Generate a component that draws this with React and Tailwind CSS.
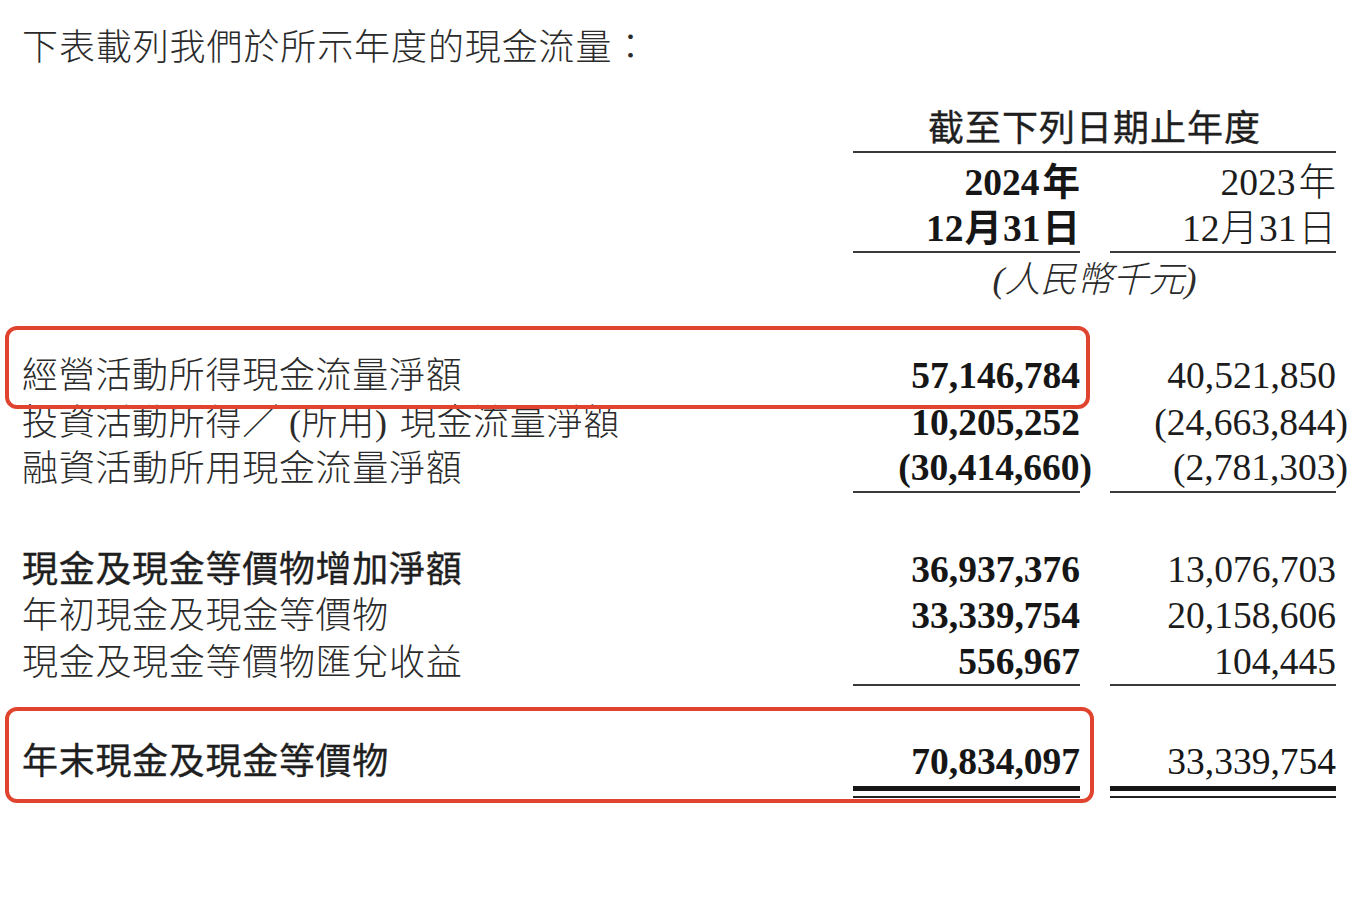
import React from 'react'

const serif = { fontFamily: '"Liberation Serif", "Noto Sans CJK TC", serif' }

const rowsTop = [
  { key: 'op', label: '經營活動所得現金流量淨額', a: '57,146,784', b: '40,521,850' },
  {
    key: 'inv',
    label: (
      <>
        投資活動所得／<span className="ml-[10px]">(</span>所用<span className="mr-[12px]">)</span>現金流量淨額
      </>
    ),
    a: '10,205,252',
    b: '(24,663,844)',
    bNeg: true,
  },
  { key: 'fin', label: '融資活動所用現金流量淨額', a: '(30,414,660)', aNeg: true, b: '(2,781,303)', bNeg: true },
]

const rowsMid = [
  { key: 'inc', label: '現金及現金等價物增加淨額', bold: true, a: '36,937,376', b: '13,076,703' },
  { key: 'beg', label: '年初現金及現金等價物', a: '33,339,754', b: '20,158,606' },
  { key: 'fx', label: '現金及現金等價物匯兌收益', a: '556,967', b: '104,445' },
]

const medium = 'font-normal text-[#1f1f1f] [-webkit-text-stroke:0.35px_#1f1f1f]'

const Num = ({ value, neg, bold }) => (
  <span className={`${bold ? 'font-bold' : 'font-normal'} ${neg ? '-mr-[12px]' : ''}`}>{value}</span>
)

const Row = ({ row, last }) => (
  <div className="flex h-[46.5px] items-center">
    <div className={`flex-1 pl-[22px] text-[36px] leading-[46px] tracking-[0.7px] whitespace-nowrap ${row.bold ? medium : 'font-light text-[#2b2b2b]'}`}>
      {row.label}
    </div>
    <div className={`w-[227px] h-full flex items-center justify-end text-[37.5px] leading-[46px] text-[#161616] ${last ? 'border-b-2 border-[#3a3a3a]' : ''}`}>
      <Num value={row.a} neg={row.aNeg} bold />
    </div>
    <div className="w-[30px]" />
    <div className={`w-[226px] h-full flex items-center justify-end text-[37.5px] leading-[46px] text-[#1c1c1c] ${last ? 'border-b-2 border-[#3a3a3a]' : ''}`}>
      <Num value={row.b} neg={row.bNeg} />
    </div>
    <div className="w-[30px]" />
  </div>
)

const TotalCell = ({ value, bold, width }) => (
  <div className={width}>
    <div className={`h-[46px] text-right text-[37.5px] leading-[46px] text-[#161616] ${bold ? 'font-bold' : 'font-normal'}`}>{value}</div>
    <div className="mt-[1px] h-[5px] bg-[#161616]" />
    <div className="mt-[5px] h-[2px] bg-[#222]" />
  </div>
)

export default function App() {
  return (
    <div className="relative w-[1366px] h-[900px] bg-white overflow-hidden" style={serif}>
      {/* intro */}
      <div className="pt-[25px] pl-[22px] text-[36px] leading-[46px] tracking-[0.9px] font-light text-[#2b2b2b]">
        下表載列我們於所示年度的現金流量：
      </div>

      {/* column header */}
      <div className="mt-[35px] flex">
        <div className="flex-1" />
        <div className="w-[483px]">
          <div className={`h-[47px] border-b-2 border-[#3a3a3a] text-center text-[36px] leading-[46px] tracking-[1px] ${medium}`}>
            截至下列日期止年度
          </div>
          <div className="flex pt-[7px]">
            <div className="w-[227px] border-b-2 border-[#3a3a3a] text-right text-[37.5px] font-bold text-[#161616]">
              <div className="h-[46px] leading-[46px]">2024<span className="ml-[3px]">年</span></div>
              <div className="h-[45px] leading-[46px]">12<span className="mx-[1px]">月</span>31<span className="ml-[2px]">日</span></div>
            </div>
            <div className="w-[30px]" />
            <div className="w-[226px] border-b-2 border-[#3a3a3a] text-right text-[37.5px] font-normal text-[#1c1c1c]">
              <div className="h-[46px] leading-[46px]">2023<span className="ml-[3px] font-light">年</span></div>
              <div className="h-[45px] leading-[46px]">12<span className="mx-[1px] font-light">月</span>31<span className="ml-[2px] font-light">日</span></div>
            </div>
          </div>
          <div className="mt-[4px] h-[46px] text-center text-[36px] leading-[46px] italic font-light text-[#2b2b2b]">
            (人民幣千元)
          </div>
        </div>
        <div className="w-[30px]" />
      </div>

      {/* first block */}
      <div className="mt-[50px]">
        {rowsTop.map((r, i) => (
          <Row key={r.key} row={r} last={i === rowsTop.length - 1} />
        ))}
      </div>

      {/* second block */}
      <div className="mt-[54px]">
        {rowsMid.map((r, i) => (
          <Row key={r.key} row={r} last={i === rowsMid.length - 1} />
        ))}
      </div>

      {/* closing total */}
      <div className="mt-[53px] flex">
        <div className={`flex-1 pl-[22px] h-[46px] text-[36px] leading-[46px] tracking-[0.7px] ${medium}`}>
          年末現金及現金等價物
        </div>
        <TotalCell value="70,834,097" bold width="w-[227px]" />
        <div className="w-[30px]" />
        <TotalCell value="33,339,754" width="w-[226px]" />
        <div className="w-[30px]" />
      </div>

      {/* highlight boxes drawn over the table */}
      <div className="absolute left-[5px] top-[326px] w-[1085px] h-[83px] rounded-[12px] border-[4px] border-[#e0442f] pointer-events-none" />
      <div className="absolute left-[5px] top-[707px] w-[1089px] h-[96px] rounded-[12px] border-[4px] border-[#e0442f] pointer-events-none" />
    </div>
  )
}
